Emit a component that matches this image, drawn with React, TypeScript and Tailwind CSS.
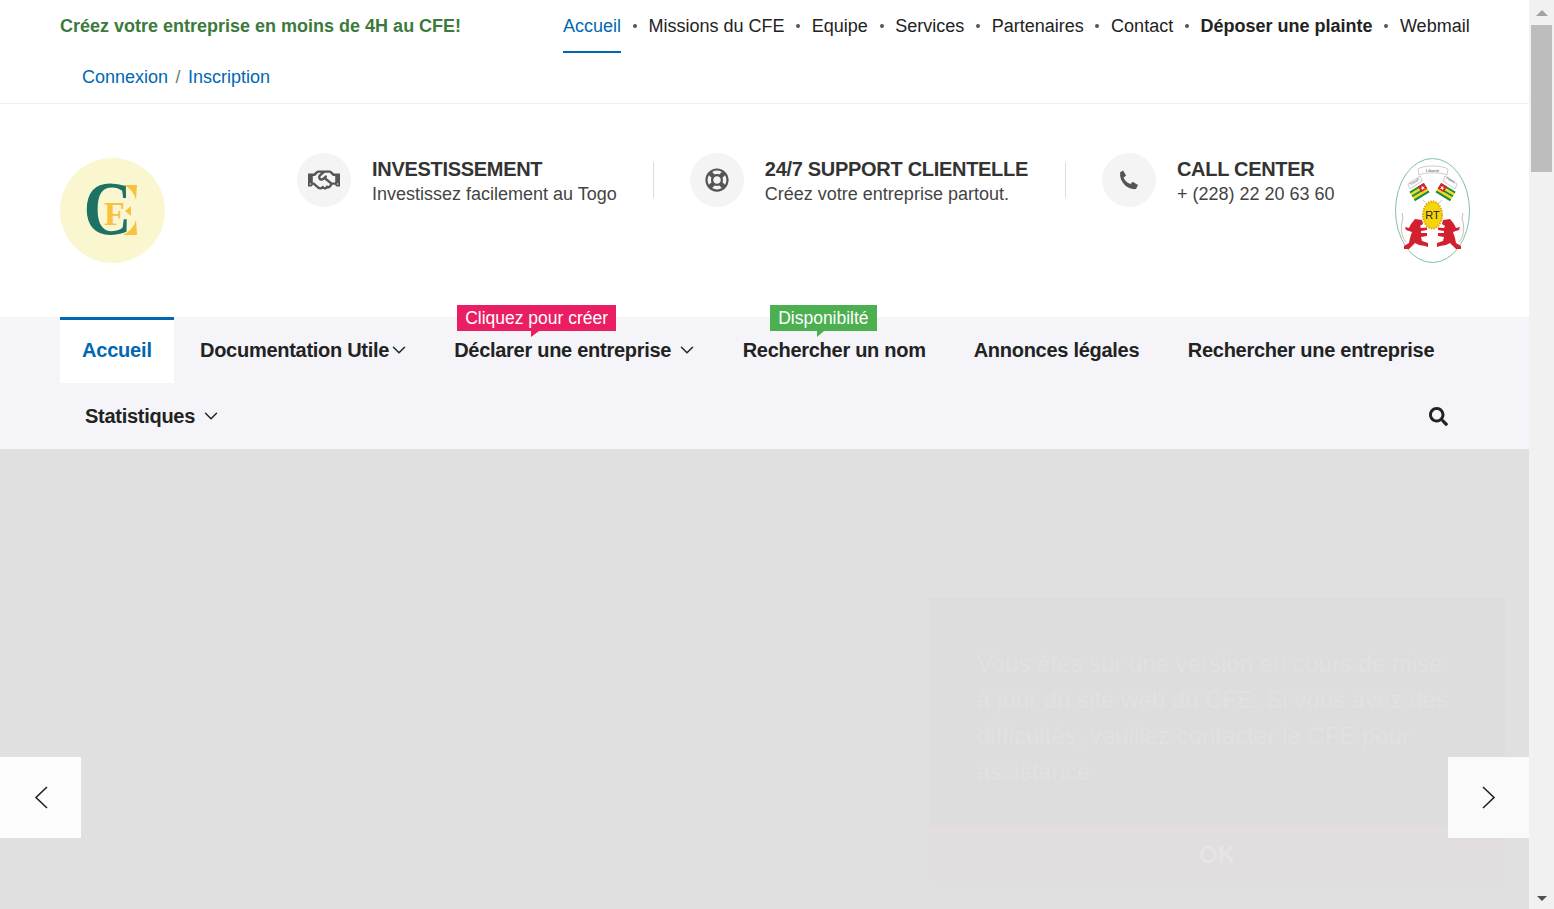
import { ChevronDown } from "lucide-react";
import { FaRegHandshake, FaRegLifeRing, FaSearch } from "react-icons/fa";
import type { ReactNode } from "react";

const TOP_LINKS = [
  "Accueil",
  "Missions du CFE",
  "Equipe",
  "Services",
  "Partenaires",
  "Contact",
  "Déposer une plainte",
  "Webmail",
];

function Logo() {
  return (
    <svg width="105" height="105" viewBox="0 0 105 105" className="shrink-0">
      <circle cx="52.5" cy="52.5" r="52.5" fill="#faf6d0" />
      <path d="M64 27h13l-1 15c-2-7-6-12-12-15z" fill="#f7c142" />
      <path d="M63 77h14l-1-15c-2 7-7 12-13 15z" fill="#f7c142" />
      <text
        transform="translate(23.500 75.500) scale(0.88 1)"
        fontFamily="'Liberation Serif', serif"
        fontSize="76"
        fontWeight="700"
        fill="#1d7263"
      >
        C
      </text>
      <text x="44" y="67" fontFamily="'Liberation Serif', serif" fontSize="34" fontWeight="700" fill="#f7c142">
        F
      </text>
      <path d="M71 48l-6 5 6 5z" fill="#f7c142" />
    </svg>
  );
}

function Flag() {
  return (
    <g transform="translate(14.3 33.7) rotate(-31)">
      <rect width="17" height="2.2" fill="#1c8a3f" />
      <rect y="2.2" width="17" height="2.2" fill="#f5d90a" />
      <rect y="4.4" width="17" height="2.2" fill="#1c8a3f" />
      <rect y="6.6" width="17" height="2.2" fill="#f5d90a" />
      <rect y="8.8" width="17" height="2.2" fill="#1c8a3f" />
      <rect x="10" y="0" width="7" height="6.6" fill="#d8232a" />
      <path d="M13.5 1.4l.7 1.6 1.6.1-1.3 1 .5 1.6-1.5-.9-1.5.9.5-1.6-1.3-1 1.6-.1z" fill="#fff" />
    </g>
  );
}

function Lion() {
  return (
    <g>
      {/* tail */}
      <path d="M11 84c-5-6-6-14-3-24l-1-5" fill="none" stroke="#b9a9a9" strokeWidth="0.8" />
      <path d="M20 61L27 62 28 66 25 68 26 70 32 69.500 32 72 26 73 26 75 32 75 32 78 26 79 27 83 33 85 33 89 30 88 24 87 20 85 14 91 9 91 9 88 14 85 15 80 17 74 11 72 10 69 14 70 16 66z" fill="#d3202f" />
    </g>
  );
}

function Emblem() {
  const ribbon = "'Liberation Sans', sans-serif";
  return (
    <svg width="75" height="105" viewBox="0 0 75 105" className="-mr-px ml-auto shrink-0">
      <ellipse cx="37.5" cy="52.5" rx="37" ry="52" fill="#fff" stroke="#6fb9a0" strokeWidth="0.9" />
      <path d="M23 11c5-4 24-4 30 0l-1 6c-6-3-21-3-28 0z" fill="#fff" stroke="#999" strokeWidth="0.5" />
      <path d="M13 26l12-8 2 5-12 8z" fill="#fff" stroke="#999" strokeWidth="0.5" />
      <path d="M62 26l-12-8-2 5 12 8z" fill="#fff" stroke="#999" strokeWidth="0.5" />
      <text x="37.5" y="14" textAnchor="middle" fontFamily={ribbon} fontSize="4.4" fill="#555">
        Liberté
      </text>
      <text transform="translate(15.5 27.5) rotate(-33)" fontFamily={ribbon} fontSize="3.6" fill="#555">
        Travail
      </text>
      <text transform="translate(51 20.5) rotate(33)" fontFamily={ribbon} fontSize="3.6" fill="#555">
        Patrie
      </text>
      <Flag />
      <g transform="translate(75 0) scale(-1 1)">
        <Flag />
      </g>
      <path d="M28 42l6 6M47 42l-6 6" stroke="#999" strokeWidth="0.6" />
      <ellipse cx="37.5" cy="57" rx="9.500" ry="13.500" fill="#f6d50c" stroke="#e3a808" strokeWidth="2" strokeDasharray="1.6 1" />
      <text x="37.5" y="61" textAnchor="middle" fontFamily={ribbon} fontSize="11" fill="#222">
        RT
      </text>
      <Lion />
      <g transform="translate(75 0) scale(-1 1)">
        <Lion />
      </g>
    </svg>
  );
}

function PhoneIcon() {
  return (
    <svg width="25" height="23" viewBox="0 0 21 19" fill="#555">
      <path d="M3.5 2.5L6 1l2.500 4.500-2.200 1.500c1 2.500 3 4.500 6 5.500l1.700-2 4.500 2.700-1.700 3.500C9.500 17.500 2.500 10.500 3.500 2.500z" />
    </svg>
  );
}

function InfoBox({ icon, title, text }: { icon: ReactNode; title: string; text: string }) {
  return (
    <div className="flex items-start gap-[21px]">
      <span className="grid h-[54px] w-[54px] shrink-0 place-items-center rounded-full bg-[#f4f4f4] text-[#555]">
        {icon}
      </span>
      <div className="pt-[3px]">
        <p className="text-[20px] leading-[26px] font-bold tracking-[-0.3px] whitespace-nowrap text-[#333]">{title}</p>
        <p className="text-[18px] leading-[24px] whitespace-nowrap text-[#444]">{text}</p>
      </div>
    </div>
  );
}

function Tag({ label, color, className }: { label: string; color: string; className: string }) {
  return (
    <span
      className={`absolute top-[-12px] h-[26px] px-2 text-[17.5px] leading-[26px] font-normal tracking-normal whitespace-nowrap text-white ${color} ${className}`}
    >
      {label}
    </span>
  );
}

function NavChevron({ className }: { className: string }) {
  return <ChevronDown className={`h-[22px] w-[22px] ${className}`} strokeWidth={1.6} />;
}

function SlideArrow({ flip }: { flip?: boolean }) {
  return (
    <svg width="14" height="23" viewBox="0 0 14 23" fill="none" stroke="#222" strokeWidth="1.6" className={flip ? "-scale-x-100" : ""}>
      <path d="M13 1L2 11.500 13 22" />
    </svg>
  );
}

const linkStyle = "text-[20px] leading-[66px] font-bold tracking-[-0.28px] whitespace-nowrap text-[#222]";

export default function App() {
  return (
    <div className="flex h-[909px] overflow-hidden bg-white font-['Liberation_Sans',Arial,sans-serif]">
      <div className="flex min-w-0 flex-1 flex-col">
        {/* top bar */}
        <div className="h-[104px] shrink-0 border-b border-[#f0f0f0] px-[60px]">
          <div className="flex h-[53px]">
            <p className="w-[503px] shrink-0 pt-[14px] text-[18px] leading-[24px] font-bold text-[#3c7a3c]">
              Créez votre entreprise en moins de 4H au CFE!
            </p>
            <nav className="flex items-start text-[18px] leading-[24px] whitespace-nowrap text-[#222]">
              {TOP_LINKS.map((link, i) => (
                <span key={link} className="flex shrink-0 items-start">
                  {i > 0 && <span className="mx-[11.7px] mt-[24px] h-[4px] w-[4px] rounded-full bg-[#555]" />}
                  <a
                    className={
                      i === 0
                        ? "h-[53px] border-b-[2px] border-[#0067b1] pt-[14px] text-[#0067b1]"
                        : i === 6
                          ? "pt-[14px] font-bold"
                          : "pt-[14px]"
                    }
                  >
                    {link}
                  </a>
                </span>
              ))}
            </nav>
          </div>
          <div className="flex gap-[7.5px] pt-[12px] pl-[22px] text-[18px] leading-[24px] text-[#0067b1]">
            <a>Connexion</a>
            <span className="text-[#777]">/</span>
            <a>Inscription</a>
          </div>
        </div>

        {/* logo + contact boxes */}
        <div className="flex h-[213px] shrink-0 items-start px-[60px] pt-[54px]">
          <Logo />
          <div className="-mt-[5px] ml-[132px] flex items-start">
            <InfoBox
              icon={<FaRegHandshake className="h-[28px] w-[32px]" />}
              title="INVESTISSEMENT"
              text="Investissez facilement au Togo"
            />
            <span className="mx-[36px] mt-[9px] h-[36px] w-px bg-[#ddd]" />
            <InfoBox
              icon={<FaRegLifeRing className="h-[24px] w-[24px]" />}
              title="24/7 SUPPORT CLIENTELLE"
              text="Créez votre entreprise partout."
            />
            <span className="mt-[9px] mr-[36px] ml-[37px] h-[36px] w-px bg-[#ddd]" />
            <InfoBox icon={<PhoneIcon />} title="CALL CENTER" text="+ (228) 22 20 63 60" />
          </div>
          <Emblem />
        </div>

        {/* main nav */}
        <div className="h-[132px] shrink-0 bg-[#f4f4f9] px-[60px]">
          <div className="flex h-[66px]">
            <a className="h-[66px] w-[114px] border-t-[3px] border-[#0067b1] bg-white pl-[22px] text-[20px] leading-[60px] font-bold tracking-[-0.2px] text-[#0067b1]">
              Accueil
            </a>
            <a className={`${linkStyle} ml-[26px] flex items-center`}>
              Documentation Utile
              <NavChevron className="-ml-px" />
            </a>
            <a className={`${linkStyle} relative ml-[44px] flex items-center`}>
              Déclarer une entreprise
              <NavChevron className="ml-[5px]" />
              <Tag label="Cliquez pour créer" color="bg-[#e91e63]" className="left-[3px]" />
              <span className="absolute top-[14px] left-[77px] h-0 w-0 border-t-[6px] border-r-[8px] border-t-[#e91e63] border-r-transparent" />
            </a>
            <a className={`${linkStyle} relative ml-[44.5px]`}>
              Rechercher un nom
              <Tag label="Disponibilté" color="bg-[#4caf50]" className="left-[27.5px]" />
              <span className="absolute top-[14px] left-[74px] h-0 w-0 border-t-[6px] border-r-[7px] border-t-[#4caf50] border-r-transparent" />
            </a>
            <a className={`${linkStyle} ml-[48px]`}>Annonces légales</a>
            <a className={`${linkStyle} ml-[48.5px]`}>Rechercher une entreprise</a>
          </div>
          <div className="flex h-[66px] items-center justify-between pr-[21px] pl-[25px]">
            <a className={`${linkStyle} flex items-center`}>
              Statistiques
              <NavChevron className="ml-[5px]" />
            </a>
            <FaSearch className="h-[19px] w-[19px] text-[#222]" />
          </div>
        </div>

        {/* slider */}
        <div className="relative flex-1 bg-[#e0e0e0]">
          <div className="absolute top-[149px] right-[24px] flex h-[286px] w-[576px] flex-col bg-[#dddddd]">
            <p className="flex-1 px-[48px] pt-[48px] text-[24px] leading-[36px] text-[#e1e1e1]">
              Vous êtes sur une version en cours de mise à jour du site web du CFE. Si vous avez des difficultés, veuillez contacter le CFE pour assistance
            </p>
            <button className="h-[58px] bg-[#e2dedf] text-[24px] font-bold text-[#e6e4e4]">OK</button>
          </div>
          <button className="absolute top-[308px] left-0 grid h-[81px] w-[81px] place-items-center bg-[#fdfdfd]">
            <SlideArrow />
          </button>
          <button className="absolute top-[308px] right-0 grid h-[81px] w-[81px] place-items-center bg-white/85">
            <SlideArrow flip />
          </button>
        </div>
      </div>

      {/* browser scrollbar */}
      <div className="flex w-[25px] shrink-0 flex-col items-center bg-[#f1f1f1]">
        <span className="mt-[10px] h-0 w-0 border-x-[6px] border-b-[6px] border-x-transparent border-b-[#a3a3a3]" />
        <span className="mt-[9px] h-[147px] w-[21px] bg-[#bdbdbd]" />
        <span className="mt-auto mb-[8px] h-0 w-0 border-x-[5px] border-t-[5px] border-x-transparent border-t-[#505050]" />
      </div>
    </div>
  );
}
